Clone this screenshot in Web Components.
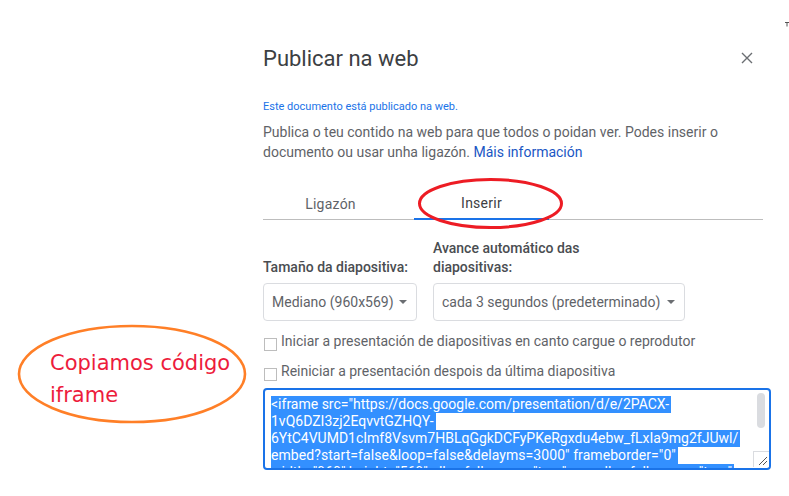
<!DOCTYPE html>
<html lang="gl">
<head>
<meta charset="utf-8">
<title>Publicar na web</title>
<style>
html, body { margin: 0; height: 100%; background: #fff; overflow: hidden; }
body { font-family: Roboto, "Liberation Sans", sans-serif; }
</style>
</head>
<body>
<pub-page>
  <pub-dialog>
    <span slot="title">Publicar na web</span>
    <span slot="status">Este documento está publicado na web.</span>
    Publica o teu contido na web para que todos o poidan ver. Podes inserir o documento ou usar unha ligazón. <a href="#">Máis información</a>
    <pub-tabs slot="tabs"></pub-tabs>
    <pub-select slot="size" label="Tamaño da diapositiva:" value="Mediano (960x569)" width="154"></pub-select>
    <pub-select slot="advance" label="Avance automático das diapositivas:" value="cada 3 segundos (predeterminado)" width="252"></pub-select>
    <pub-check slot="checks">Iniciar a presentación de diapositivas en canto cargue o reprodutor</pub-check>
    <pub-check slot="checks">Reiniciar a presentación despois da última diapositiva</pub-check>
    <pub-code slot="code"></pub-code>
  </pub-dialog>
  <pub-note></pub-note>
</pub-page>
<script>
customElements.define("pub-page", class extends HTMLElement {
  constructor() {
    super();
    this.attachShadow({mode: "open"}).innerHTML = `
<style>
:host {
  display: block;
  position: relative;
  height: 496px;
  padding-left: 263px;
  box-sizing: border-box;
  overflow: hidden;
}
</style>
<slot></slot>
<svg width="6" height="6" style="position:absolute;left:785px;top:22px"><path d="M0 .5h4M2 .5v4" stroke="#555" stroke-width="1"/></svg>`;
  }
});

customElements.define("pub-dialog", class extends HTMLElement {
  constructor() {
    super();
    this.attachShadow({mode: "open"}).innerHTML = `
<style>
:host {
  display: block;
  width: 500px;
  color: #5f6368;
  font-size: 14px;
}
.head {
  display: flex;
  justify-content: space-between;
  align-items: center;
  height: 28px;
  padding-top: 44px;
}
.title {
  font-size: 22px;
  color: #3c4043;
}
.close { display: block; margin-right: 10px; }
.status {
  margin-top: 29px;
  font-size: 11px;
  line-height: 12px;
  color: #1a73e8;
}
.text {
  margin-top: 9px;
  line-height: 20px;
  width: 480px;
}
::slotted(a) { color: #1a56c4; text-decoration: none; }
.selects {
  display: flex;
  gap: 16px;
  align-items: flex-end;
  margin-top: 19px;
}
.checks {
  display: flex;
  flex-direction: column;
  gap: 10px;
  margin-top: 10px;
}
.code { margin-top: 7px; }
</style>
<div class="head">
  <div class="title"><slot name="title"></slot></div>
  <svg class="close" width="12" height="12" viewBox="0 0 12 12"><path d="M1 1l10 10M11 1L1 11" stroke="#6b6e72" stroke-width="1.4" fill="none"/></svg>
</div>
<div class="status"><slot name="status"></slot></div>
<div class="text"><slot></slot></div>
<slot name="tabs"></slot>
<div class="selects"><slot name="size"></slot><slot name="advance"></slot></div>
<div class="checks"><slot name="checks"></slot></div>
<div class="code"><slot name="code"></slot></div>`;
  }
});

customElements.define("pub-tabs", class extends HTMLElement {
  constructor() {
    super();
    this.attachShadow({mode: "open"}).innerHTML = `
<style>
:host {
  display: flex;
  margin-top: 20px;
  height: 38px;
  box-sizing: border-box;
  border-bottom: 1px solid #bdbdbd;
  font-size: 14px;
  letter-spacing: 0.25px;
}
.tab {
  width: 135px;
  margin-right: 16px;
  padding-top: 7px;
  display: flex;
  align-items: center;
  justify-content: center;
  box-sizing: border-box;
  height: 37px;
  color: #5f6368;
}
.on {
  color: #3c4043;
  height: 38px;
  padding-bottom: 1px;
  border-bottom: 2px solid #1a73e8;
}
</style>
<div class="tab">Ligazón</div>
<div class="tab on">Inserir</div>`;
  }
});

customElements.define("pub-select", class extends HTMLElement {
  constructor() {
    super();
    const w = this.getAttribute("width");
    this.attachShadow({mode: "open"}).innerHTML = `
<style>
:host { display: block; }
.label {
  font-size: 14px;
  line-height: 19px;
  font-weight: 500;
  color: #4a4d51;
  margin-bottom: 6px;
  max-width: 170px;
}
.box {
  display: flex;
  align-items: center;
  justify-content: space-between;
  box-sizing: border-box;
  width: ${w}px;
  height: 38px;
  padding: 0 9px 0 8px;
  border: 1px solid #dadce0;
  border-radius: 4px;
  color: #5f6368;
  font-size: 14px;
}
.arrow { width: 0; height: 0; border: 4px solid transparent; border-top: 4px solid #6b6e72; border-bottom: 0; }
</style>
<div class="label">${this.getAttribute("label")}</div>
<div class="box"><span>${this.getAttribute("value")}</span><span class="arrow"></span></div>`;
  }
});

customElements.define("pub-check", class extends HTMLElement {
  constructor() {
    super();
    this.attachShadow({mode: "open"}).innerHTML = `
<style>
:host {
  display: flex;
  align-items: flex-start;
  gap: 4px;
  height: 20px;
  line-height: 20px;
  font-size: 14px;
  color: #5f6368;
}
.box {
  flex: none;
  width: 11px;
  height: 11px;
  margin: 7px 0 0 1px;
  border: 1px solid #bdbdbd;
}
</style>
<span class="box"></span><span><slot></slot></span>`;
  }
});

customElements.define("pub-code", class extends HTMLElement {
  constructor() {
    super();
    this.attachShadow({mode: "open"}).innerHTML = `
<style>
:host {
  display: block;
  position: relative;
  width: 508px;
  height: 82px;
  box-sizing: border-box;
  border: 2px solid #1a73e8;
  border-radius: 4px;
  overflow: hidden;
  padding: 6px 0 0 6px;
  font-size: 14px;
  line-height: 17px;
  color: #fff;
}
.line { height: 17px; white-space: nowrap; }
.line span { background: #3390ff; padding-right: 2px; display: inline-block; height: 17px; }
.wide { letter-spacing: 0.07px; }
.thumb {
  position: absolute;
  right: 4px;
  top: 3px;
  width: 8px;
  height: 35px;
  border-radius: 4px;
  background: #dadce0;
}
.grip {
  position: absolute;
  right: 0;
  bottom: 1px;
  width: 15px;
  height: 15px;
  background: #fff;
  border: 1px solid #dadce0;
  border-width: 1px 0 0 1px;
}
</style>
<div class="line"><span>&lt;iframe src="https://docs.google.com/presentation/d/e/2PACX-</span></div>
<div class="line"><span>1vQ6DZI3zj2EqvvtGZHQY-</span></div>
<div class="line"><span>6YtC4VUMD1cImf8Vsvm7HBLqGgkDCFyPKeRgxdu4ebw_fLxIa9mg2fJUwl/</span></div>
<div class="line"><span class="wide">embed?start=false&amp;loop=false&amp;delayms=3000" frameborder="0"</span></div>
<div class="line"><span>width="960" height="569" allowfullscreen="true" mozallowfullscreen="true"</span></div>
<div class="thumb"></div>
<div class="grip"><svg width="15" height="15" viewBox="0 0 15 15" style="display:block"><path d="M5 13l8-8M9 13l4-4" stroke="#555" stroke-width="1" fill="none"/></svg></div>`;
  }
});

customElements.define("pub-note", class extends HTMLElement {
  constructor() {
    super();
    this.attachShadow({mode: "open"}).innerHTML = `
<style>
:host {
  position: absolute;
  left: 0;
  top: 0;
  width: 789px;
  height: 496px;
  pointer-events: none;
}
svg { position: absolute; left: 0; top: 0; }
.note {
  position: absolute;
  left: 50px;
  top: 347px;
  font-family: "DejaVu Sans", sans-serif;
  font-size: 21px;
  line-height: 32px;
  color: #ed1c3c;
}
</style>
<svg width="789" height="496" fill="none">
  <ellipse cx="490.5" cy="203.5" rx="71" ry="24" stroke="#ed1c24" stroke-width="3"/>
  <ellipse cx="132" cy="374" rx="113" ry="48" stroke="#ff7f27" stroke-width="2.6"/>
</svg>
<div class="note">Copiamos código<br>iframe</div>`;
  }
});
</script>
</body>
</html>
